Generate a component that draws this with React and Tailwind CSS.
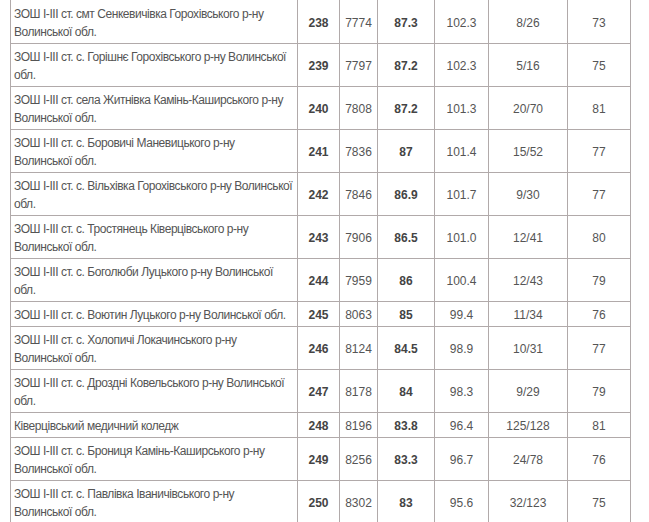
const rows = [
  [['ЗОШ І-ІІІ ст. смт Сенкевичівка Горохівського р-ну', 'Волинської обл.'], '238', '7774', '87.3', '102.3', '8/26', '73'],
  [['ЗОШ І-ІІІ ст. с. Горішнє Горохівського р-ну Волинської', 'обл.'], '239', '7797', '87.2', '102.3', '5/16', '75'],
  [['ЗОШ І-ІІІ ст. села Житнівка Камінь-Каширського р-ну', 'Волинської обл.'], '240', '7808', '87.2', '101.3', '20/70', '81'],
  [['ЗОШ І-ІІІ ст. с. Боровичі Маневицького р-ну', 'Волинської обл.'], '241', '7836', '87', '101.4', '15/52', '77'],
  [['ЗОШ І-ІІІ ст. с. Вільхівка Горохівського р-ну Волинської', 'обл.'], '242', '7846', '86.9', '101.7', '9/30', '77'],
  [['ЗОШ І-ІІІ ст. с. Тростянець Ківерцівського р-ну', 'Волинської обл.'], '243', '7906', '86.5', '101.0', '12/41', '80'],
  [['ЗОШ І-ІІІ ст. с. Боголюби Луцького р-ну Волинської', 'обл.'], '244', '7959', '86', '100.4', '12/43', '79'],
  [['ЗОШ І-ІІІ ст. с. Воютин Луцького р-ну Волинської обл.'], '245', '8063', '85', '99.4', '11/34', '76'],
  [['ЗОШ І-ІІІ ст. с. Холопичі Локачинського р-ну', 'Волинської обл.'], '246', '8124', '84.5', '98.9', '10/31', '77'],
  [['ЗОШ І-ІІІ ст. с. Дроздні Ковельського р-ну Волинської', 'обл.'], '247', '8178', '84', '98.3', '9/29', '79'],
  [['Ківерцівський медичний коледж'], '248', '8196', '83.8', '96.4', '125/128', '81'],
  [['ЗОШ І-ІІІ ст. с. Брониця Камінь-Каширського р-ну', 'Волинської обл.'], '249', '8256', '83.3', '96.7', '24/78', '76'],
  [['ЗОШ І-ІІІ ст. с. Павлівка Іваничівського р-ну', 'Волинської обл.'], '250', '8302', '83', '95.6', '32/123', '75'],
]

const cell = 'border border-[#b1aaaa] px-[3px] pt-[4px] pb-[2px] align-middle'

export default function App() {
  return (
    <div className="min-h-screen bg-white pl-[10px] font-['Liberation_Sans',Arial,sans-serif] text-[12px] leading-[18px] text-[#555]">
      <table className="table-fixed border-collapse w-[620px]">
        <colgroup>
          <col className="w-[287px]" />
          <col className="w-[42px]" />
          <col className="w-[38px]" />
          <col className="w-[57px]" />
          <col className="w-[54px]" />
          <col className="w-[79px]" />
          <col className="w-[63px]" />
        </colgroup>
        <tbody>
          {rows.map((r) => (
            <tr key={r[1]} className="[&:first-child>td]:border-t-transparent">
              <td className={`${cell} text-left whitespace-nowrap tracking-[-0.45px]`}>
                {r[0].map((line, i) => (
                  <span key={i} className="block">{line}</span>
                ))}
              </td>
              <td className={`${cell} text-center font-bold text-[#444]`}>{r[1]}</td>
              <td className={`${cell} text-center`}>{r[2]}</td>
              <td className={`${cell} text-center font-bold text-[#444]`}>{r[3]}</td>
              <td className={`${cell} text-center`}>{r[4]}</td>
              <td className={`${cell} text-center`}>{r[5]}</td>
              <td className={`${cell} text-center`}>{r[6]}</td>
            </tr>
          ))}
        </tbody>
      </table>
    </div>
  )
}
